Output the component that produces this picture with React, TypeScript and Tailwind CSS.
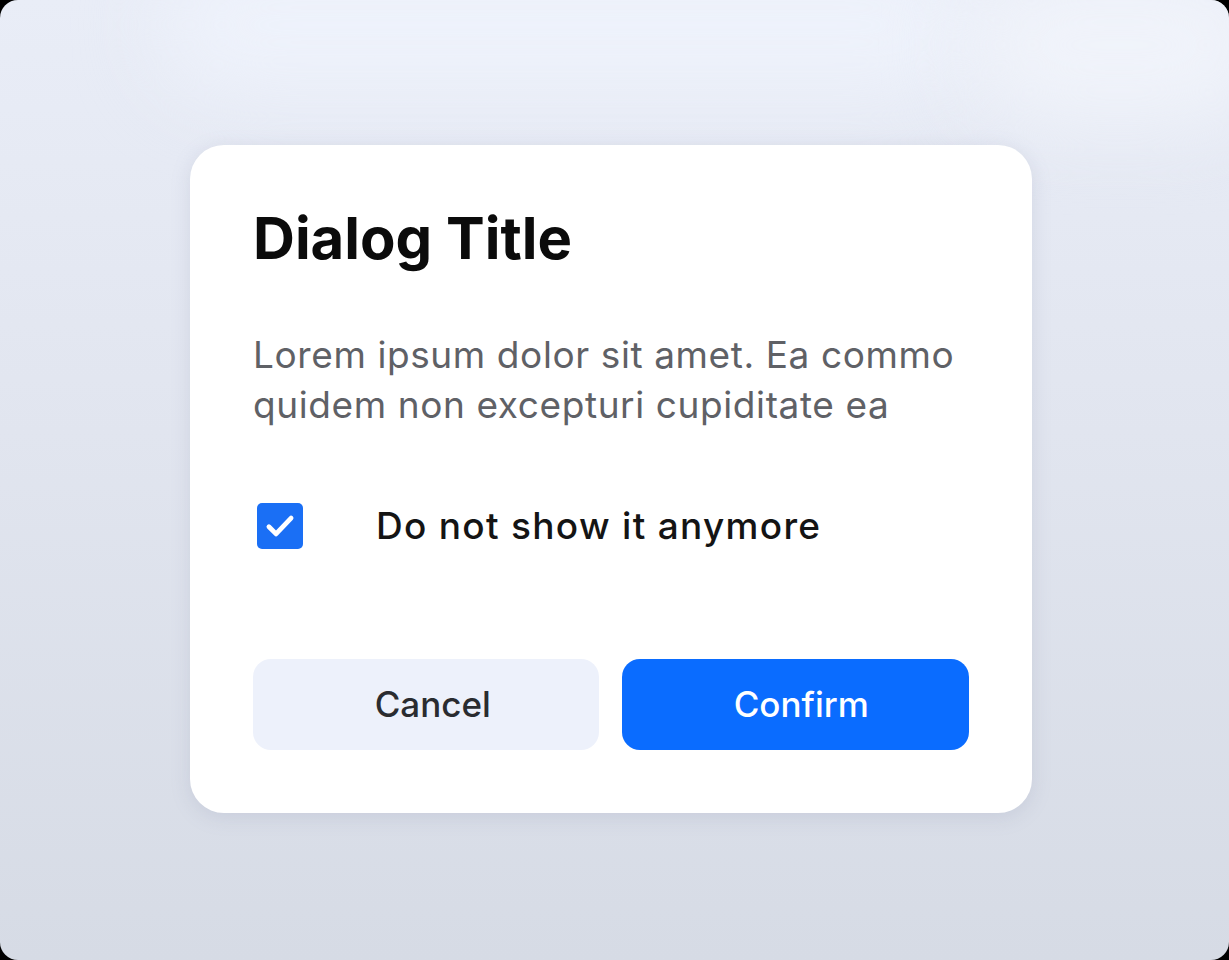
import { useState } from 'react';

export default function App() {
  const [checked, setChecked] = useState(true);

  return (
    <div className="h-[960px] w-[1229px] bg-black">
      <div className="relative flex h-full w-full items-start overflow-hidden rounded-[18px] bg-[linear-gradient(180deg,#e9edf7_0%,#e1e5ef_45%,#d6dbe5_100%)] font-['Inter','Liberation_Sans',sans-serif]">
        {/* soft background blobs */}
        <div className="pointer-events-none absolute left-[160px] top-[-40px] h-[130px] w-[820px] rounded-full bg-[#eef2fb] blur-2xl" />
        <div className="pointer-events-none absolute right-[-40px] top-[-30px] h-[150px] w-[300px] rounded-full bg-[#f0f3fa] blur-2xl" />

        {/* Dialog */}
        <div className="relative ml-[190px] mt-[145px] flex w-[842px] flex-col rounded-[34px] bg-white px-[63px] pb-[63px] pt-[58px] shadow-[0_4px_20px_rgba(120,130,160,0.18)]">
          <h1 className="text-[58px] font-bold leading-[70px] text-[#0b0b0b]">Dialog Title</h1>

          <p className="mt-[57px] text-[37px] leading-[50px] tracking-[0.6px] text-[#5f6166]">
            Lorem ipsum dolor sit amet. Ea commo quidem non excepturi cupiditate ea
          </p>

          <label className="mt-[68px] flex cursor-pointer items-center">
            <button
              type="button"
              onClick={() => setChecked(!checked)}
              className={`ml-[4px] flex h-[46px] w-[46px] items-center justify-center rounded-[5px] ${checked ? 'bg-[#1a6ff5]' : 'border-2 border-[#9aa0a6] bg-white'}`}
            >
              {checked && (
                <svg viewBox="0 0 24 24" className="h-[38px] w-[38px]" fill="none" stroke="white" strokeWidth="3" strokeLinecap="round" strokeLinejoin="round">
                  <path d="M5 12.5l4.5 4.5L19 7" />
                </svg>
              )}
            </button>
            <span className="ml-[73px] text-[37px] font-medium tracking-[1.3px] text-[#141414]">Do not show it anymore</span>
          </label>

          <div className="mt-[105px] flex gap-[23px]">
            <button className="h-[91px] w-[346px] rounded-[18px] bg-[#edf1fb] pl-[14px] text-[35px] font-medium text-[#2a2c30]">
              Cancel
            </button>
            <button className="h-[91px] w-[348px] rounded-[18px] bg-[#0a6cff] pl-[12px] text-[35px] font-medium text-white">
              Confirm
            </button>
          </div>
        </div>
      </div>
    </div>
  );
}
